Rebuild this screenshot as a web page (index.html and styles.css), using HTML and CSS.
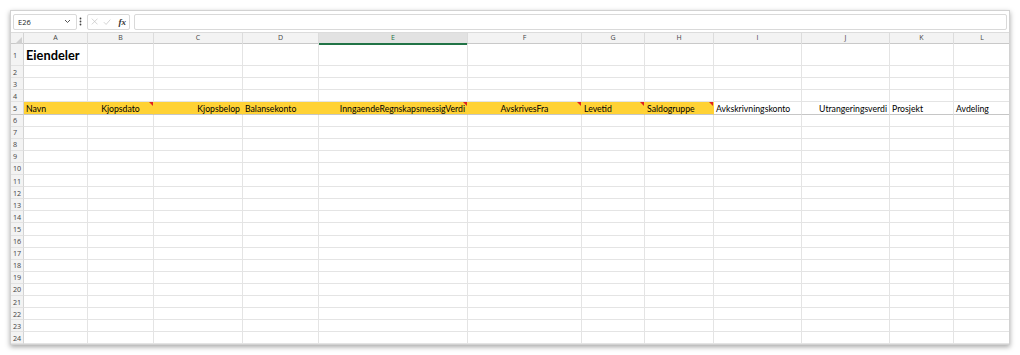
FILE: index.html
```html
<!DOCTYPE html>
<html lang="en">
<head>
    <meta charset="UTF-8">
    <meta name="viewport" content="width=device-width, initial-scale=1.0">
    <title>Eiendeler</title>
    <link rel="stylesheet" href="styles.css">
</head>
<body>
    <div class="window">
        <!-- formula bar -->
        <div class="formula-bar">
            <div class="name-box">
                <span class="cell-ref">E26</span>
                <svg class="chevron" width="7" height="5" viewBox="0 0 7 5"><path d="M1 1l2.5 2.5L6 1" fill="none" stroke="#555" stroke-width="1"/></svg>
            </div>
            <div class="more-dots">
                <svg width="3" height="9" viewBox="0 0 3 9"><circle cx="1.5" cy="1.5" r="0.9" fill="#444"/><circle cx="1.5" cy="4.5" r="0.9" fill="#444"/><circle cx="1.5" cy="7.5" r="0.9" fill="#444"/></svg>
            </div>
            <div class="fx-box">
                <svg width="9" height="9" viewBox="0 0 9 9"><path d="M1 1l7 7M8 1L1 8" stroke="#c4c4c4" stroke-width="0.9"/></svg>
                <svg width="10" height="8" viewBox="0 0 10 8"><path d="M1 4.2l2.8 2.8L9 1" fill="none" stroke="#c4c4c4" stroke-width="0.9"/></svg>
                <span class="fx">fx</span>
            </div>
            <div class="formula-input"></div>
        </div>

        <!-- sheet -->
        <div class="sheet" id="sheet">
            <div class="row col-heads">
                <div class="corner"><svg width="7" height="7" viewBox="0 0 7 7"><path d="M7 0V7H0Z" fill="#d0d0d0"/></svg></div>
                <div class="col-head">A</div>
                <div class="col-head">B</div>
                <div class="col-head">C</div>
                <div class="col-head">D</div>
                <div class="col-head active">E</div>
                <div class="col-head">F</div>
                <div class="col-head">G</div>
                <div class="col-head">H</div>
                <div class="col-head">I</div>
                <div class="col-head">J</div>
                <div class="col-head">K</div>
                <div class="col-head">L</div>
            </div>

            <div class="row title-row">
                <div class="row-head">1</div>
                <div class="cell title">Eiendeler</div>
                <div class="cell"></div><div class="cell"></div><div class="cell"></div><div class="cell"></div><div class="cell"></div>
                <div class="cell"></div><div class="cell"></div><div class="cell"></div><div class="cell"></div><div class="cell"></div><div class="cell"></div>
            </div>

            <div class="row">
                <div class="row-head">2</div>
                <div class="cell"></div><div class="cell"></div><div class="cell"></div><div class="cell"></div><div class="cell"></div><div class="cell"></div>
                <div class="cell"></div><div class="cell"></div><div class="cell"></div><div class="cell"></div><div class="cell"></div><div class="cell"></div>
            </div>
            <div class="row">
                <div class="row-head">3</div>
                <div class="cell"></div><div class="cell"></div><div class="cell"></div><div class="cell"></div><div class="cell"></div><div class="cell"></div>
                <div class="cell"></div><div class="cell"></div><div class="cell"></div><div class="cell"></div><div class="cell"></div><div class="cell"></div>
            </div>
            <div class="row">
                <div class="row-head">4</div>
                <div class="cell"></div><div class="cell"></div><div class="cell"></div><div class="cell"></div><div class="cell"></div><div class="cell"></div>
                <div class="cell"></div><div class="cell"></div><div class="cell"></div><div class="cell"></div><div class="cell"></div><div class="cell"></div>
            </div>

            <!-- header row for the import -->
            <div class="row field-row">
                <div class="row-head">5</div>
                <div class="cell field">Navn</div>
                <div class="cell field center note">Kjopsdato</div>
                <div class="cell field right">Kjopsbelop</div>
                <div class="cell field">Balansekonto</div>
                <div class="cell field right note">InngaendeRegnskapsmessigVerdi</div>
                <div class="cell field center note">AvskrivesFra</div>
                <div class="cell field note">Levetid</div>
                <div class="cell field note">Saldogruppe</div>
                <div class="cell">Avkskrivningskonto</div>
                <div class="cell right">Utrangeringsverdi</div>
                <div class="cell">Prosjekt</div>
                <div class="cell">Avdeling</div>
            </div>
        </div>
    </div>

    <script>
        // empty rows 6 - 24
        const sheet = document.getElementById("sheet");
        for (let r = 6; r <= 24; r++) {
            const row = document.createElement("div");
            row.className = "row";
            let html = '<div class="row-head">' + r + '</div>';
            for (let c = 0; c < 12; c++) {
                html += '<div class="cell"></div>';
            }
            row.innerHTML = html;
            sheet.appendChild(row);
        }
    </script>
</body>
</html>
```

FILE: styles.css
```css
* {
    box-sizing: border-box;
    margin: 0;
    padding: 0;
}

body {
    background-color: #fff;
    padding: 10px;
    font-family: Lato, "Open Sans", sans-serif;
}

.window {
    width: 1000px;
    height: 335px;
    background-color: #fff;
    border: 1px solid #d2d2d2;
    box-shadow: 0 2px 5px rgba(0, 0, 0, 0.35);
    overflow: hidden;
    display: flex;
    flex-direction: column;
}

/* formula bar */
.formula-bar {
    height: 22px;
    display: flex;
    align-items: center;
    padding: 0 2px 0 2px;
    border-bottom: 1px solid #dcdcdc;
    flex-shrink: 0;
}

.name-box {
    width: 64px;
    height: 16px;
    border: 1px solid #d9d9d9;
    border-radius: 2px;
    display: flex;
    align-items: center;
    justify-content: space-between;
    padding: 0 5px 0 4px;
}

.cell-ref {
    font-family: "Open Sans", sans-serif;
    font-size: 7.5px;
    color: #222;
}

.more-dots {
    width: 4px;
    margin-left: 1px;
    display: flex;
    justify-content: center;
}

.fx-box {
    width: 43px;
    height: 16px;
    margin-left: 5px;
    border: 1px solid #d9d9d9;
    border-radius: 2px;
    display: flex;
    align-items: center;
    gap: 5px;
    padding: 0 3px;
}

.fx {
    font-family: "Liberation Serif", serif;
    font-style: italic;
    font-weight: 700;
    font-size: 9px;
    color: #333;
    margin-left: 2px;
}

.formula-input {
    flex: 1;
    height: 16px;
    margin-left: 4px;
    border: 1px solid #d9d9d9;
    border-radius: 2px;
}

/* sheet grid */
.sheet {
    flex: 1;
}

.row {
    display: grid;
    grid-template-columns: 13px 64px 66px 89px 76px 149px 114px 63px 69px 88px 88px 64px 57px;
    height: 12.1px;
}

.col-heads {
    height: 11px;
    background-color: #f3f3f3;
    border-bottom: 1px solid #c9c9c9;
}

.title-row {
    height: 22.2px;
}

.corner {
    display: flex;
    align-items: flex-end;
    justify-content: flex-end;
    padding: 0 1px 1px 0;
    border-right: 1px solid #d4d4d4;
}

.col-head {
    font-family: "Open Sans", sans-serif;
    font-size: 7px;
    color: #444;
    text-align: center;
    line-height: 10px;
    border-right: 1px solid #dcdcdc;
}

.col-head.active {
    background-color: #e2e2e2;
    color: #217346;
    border-bottom: 2px solid #217346;
}

.row-head {
    background-color: #f3f3f3;
    border-right: 1px solid #d4d4d4;
    border-bottom: 1px solid #e2e2e2;
    font-family: "Open Sans", sans-serif;
    font-size: 7.2px;
    color: #444;
    padding-left: 2px;
    display: flex;
    align-items: center;
}

.cell {
    border-right: 1px solid #e4e4e4;
    border-bottom: 1px solid #e4e4e4;
    font-size: 8.7px;
    color: #000;
    white-space: nowrap;
    padding: 0 2px;
    display: flex;
    align-items: flex-end;
    position: relative;
    overflow: visible;
}

.title {
    font-size: 12.8px;
    font-weight: 700;
    color: #000;
    align-items: center;
    padding-top: 1px;
}

.field-row .row-head,
.field-row .cell {
    border-bottom: 1px solid #c6c6c6;
}

.field {
    background-color: #ffd235;
    border-right-color: #ffd235;
}

.center {
    justify-content: center;
}

.right {
    justify-content: flex-end;
}

/* comment marker */
.note::after {
    content: "";
    position: absolute;
    top: 0;
    right: 0;
    border-top: 4px solid #e02020;
    border-left: 4px solid transparent;
}
```
